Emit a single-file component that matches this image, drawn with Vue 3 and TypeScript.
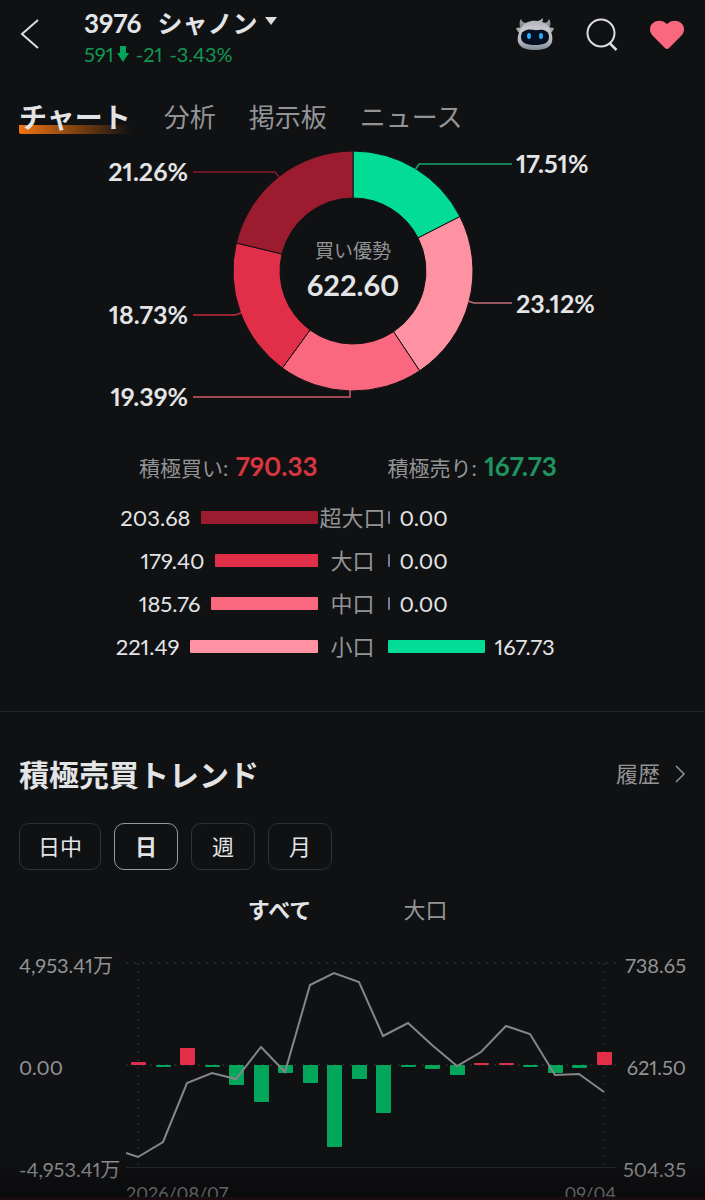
<script setup lang="ts">
import { ref } from 'vue'

interface Slice {
  share: number
  color: string
  line: string
  lineColor: string
  x: number
  y: number
  anchor: 'start' | 'end'
}

interface OrderRow {
  label: string
  buy: number
  sell: number
  color: string
}

const tabs = ['チャート', '分析', '掲示板', 'ニュース']
const activeTab = ref('チャート')
const periods = ['日中', '日', '週', '月']
const activePeriod = ref('日')
const scopes = ['すべて', '大口']
const activeScope = ref('すべて')

const slices: Slice[] = [
  { share: 17.51, color: '#03dc94', line: '62,-101 66,-107 159,-107', lineColor: '#10a674', x: 163, y: -98, anchor: 'start' },
  { share: 23.12, color: '#ff92a2', line: '115,30 121,32 159,32', lineColor: '#c06c79', x: 163, y: 42, anchor: 'start' },
  { share: 19.39, color: '#fa687f', line: '-160,126 -3,126 -3,119', lineColor: '#d05b6e', x: -165, y: 135, anchor: 'end' },
  { share: 18.73, color: '#e22f49', line: '-160,44 -118,44 -112,42', lineColor: '#c22a40', x: -165, y: 53, anchor: 'end' },
  { share: 21.26, color: '#9a1c2e', line: '-160,-99 -78,-99 -74,-94', lineColor: '#861a2b', x: -165, y: -90, anchor: 'end' },
]

const OUTER = 120
const INNER = 73

function point(radius: number, share: number): string {
  const angle = (share / 100) * Math.PI * 2
  return `${(radius * Math.sin(angle)).toFixed(2)} ${(-radius * Math.cos(angle)).toFixed(2)}`
}

let total = 0
const arcs = slices.map((slice) => {
  const from = total
  total += slice.share
  return {
    ...slice,
    path: `M${point(OUTER, from)}A${OUTER} ${OUTER} 0 0 1 ${point(OUTER, total)}L${point(INNER, total)}A${INNER} ${INNER} 0 0 0 ${point(INNER, from)}Z`,
  }
})

const rows: OrderRow[] = [
  { label: '超大口', buy: 203.68, sell: 0, color: '#9a1c2e' },
  { label: '大口', buy: 179.4, sell: 0, color: '#e22f49' },
  { label: '中口', buy: 185.76, sell: 0, color: '#fa687f' },
  { label: '小口', buy: 221.49, sell: 167.73, color: '#ff92a2' },
]

const barWidth = (value: number): string => `${Math.max(2, Math.round(value * 0.576))}px`

const flows = [3, -2, 17, -2, -20, -37, -8, -18, -82, -14, -48, -2, -4, -10, 2, 2, -2, -8, -3, 13]
const BASE = 110
const columnX = (i: number): number => Math.round(12 + (i * 466) / 19)
const prices = [202, 187, 128, 118, 124, 92, 117, 30, 18, 27, 81, 68, 90, 111, 97, 71, 79, 120, 119, 137]
const priceLine = ['0,198', ...prices.map((y, i) => `${columnX(i)},${y}`)].join(' ')
</script>

<template>
  <div class="app">
    <main class="content">
      <header class="header">
        <button class="icon-button back" type="button" aria-label="戻る">
          <svg width="20" height="32" viewBox="0 0 20 32" fill="none" stroke="#dcdddf" stroke-width="2">
            <path d="M18 2L2 16L18 30" />
          </svg>
        </button>
        <div class="stock">
          <button class="stock-name" type="button">
            <span>3976</span>
            <span class="company">シャノン</span>
            <svg width="12" height="8" viewBox="0 0 12 8"><path d="M0 0H12L6 8Z" fill="#dcdddf" /></svg>
          </button>
          <p class="quote">
            <span>591</span>
            <svg width="12" height="16" viewBox="0 0 12 16"><path d="M3 0H9V7H12L6 16L0 7H3Z" fill="#02a65b" /></svg>
            <span class="change">-21</span>
            <span>-3.43%</span>
          </p>
        </div>
        <nav class="actions" aria-label="操作">
          <button class="icon-button" type="button" aria-label="アシスタント">
            <svg width="40" height="36" viewBox="0 0 40 36">
              <defs>
                <linearGradient id="shell" x1="0" y1="0" x2="0" y2="1">
                  <stop offset="0" stop-color="#a9abb0" />
                  <stop offset="0.35" stop-color="#c6c8cc" />
                  <stop offset="0.75" stop-color="#b3b7be" />
                  <stop offset="1" stop-color="#7f8793" />
                </linearGradient>
                <linearGradient id="horn" x1="0" y1="0" x2="0" y2="1">
                  <stop offset="0" stop-color="#a9abb0" />
                  <stop offset="1" stop-color="#6e727a" />
                </linearGradient>
              </defs>
              <path d="M6 3C7 6 9 7 12 7L7 14C4 11 4 6 6 3ZM34 3C36 6 36 11 33 14L28 7C31 7 33 6 34 3Z" fill="url(#horn)" />
              <path d="M1 12L8 11L5 17C3 16 2 15 1 12ZM39 12L32 11L35 17C37 16 38 15 39 12Z" fill="#a3a7ae" />
              <path d="M7 11C10 6 16 4 22 5C24 5 26 4 28 2C28 3 28 5 27 6C31 7 34 10 35 14C37 17 38 22 37 26C35 32 29 34 20 34S5 32 3 26C2 21 4 15 7 11Z" fill="url(#shell)" />
              <path d="M20 13C9 13 6 16 6 21C6 27 11 29 20 29S34 27 34 21C34 16 31 13 20 13Z" fill="#071022" />
              <path d="M7 14C12 11 16 15 24 14C28 13 31 13 33 15C31 11 26 10 20 10S9 11 7 14Z" fill="#c3c5c9" />
              <ellipse cx="14" cy="20" rx="2" ry="3" fill="#2aaefa" />
              <ellipse cx="26" cy="20" rx="2" ry="3" fill="#2aaefa" />
            </svg>
          </button>
          <button class="icon-button" type="button" aria-label="検索">
            <svg width="34" height="36" viewBox="0 0 34 36" fill="none" stroke="#dcdddf" stroke-width="2">
              <circle cx="16" cy="17" r="13.5" />
              <path d="M24.500 27L31.500 34" stroke-width="2.500" />
            </svg>
          </button>
          <button class="icon-button" type="button" aria-label="お気に入り">
            <svg width="36" height="36" viewBox="0 0 36 36">
              <path d="M18 33C17 33 16 32 15 31L4 20C0 16 0 10 4 7C8 3.500 14 4 18 8C22 4 28 3.500 32 7C36 10 36 16 32 20L21 31C20 32 19 33 18 33Z" fill="#fa687f" />
            </svg>
          </button>
        </nav>
      </header>

      <nav class="tabs" aria-label="銘柄情報">
        <button
          v-for="tab in tabs"
          :key="tab"
          type="button"
          class="tab"
          :class="{ active: tab === activeTab }"
          @click="activeTab = tab"
        >{{ tab }}</button>
      </nav>

      <section class="distribution">
        <svg class="donut" viewBox="-253 -129 505 270" role="img" aria-label="買い優勢 622.60">
          <path v-for="arc in arcs" :key="arc.share" :d="arc.path" :fill="arc.color" stroke="#101113" stroke-width="1" />
          <polyline v-for="arc in arcs" :key="arc.line" :points="arc.line" fill="none" :stroke="arc.lineColor" stroke-width="1.500" />
          <text v-for="arc in arcs" :key="arc.color" class="share" :x="arc.x" :y="arc.y" :text-anchor="arc.anchor">{{ arc.share.toFixed(2) }}%</text>
          <text class="lead-label" x="0" y="-13" text-anchor="middle">買い優勢</text>
          <text class="lead-value" x="0" y="25" text-anchor="middle">622.60</text>
        </svg>

        <table class="orders">
          <colgroup><col /><col class="middle" /><col /></colgroup>
          <thead>
            <tr>
              <th scope="col" class="buy">積極買い: <strong>790.33</strong></th>
              <td></td>
              <th scope="col" class="sell">積極売り: <strong>167.73</strong></th>
            </tr>
          </thead>
          <tbody>
            <tr v-for="row in rows" :key="row.label">
              <td>
                <div class="measure left">
                  <span>{{ row.buy.toFixed(2) }}</span>
                  <i class="bar" :style="{ width: barWidth(row.buy), background: row.color }"></i>
                </div>
              </td>
              <th scope="row">{{ row.label }}</th>
              <td>
                <div class="measure">
                  <i class="bar" :class="row.sell ? 'sold' : 'none'" :style="{ width: barWidth(row.sell) }"></i>
                  <span>{{ row.sell.toFixed(2) }}</span>
                </div>
              </td>
            </tr>
          </tbody>
        </table>
      </section>

      <section class="trend">
        <div class="trend-head">
          <h2>積極売買トレンド</h2>
          <a href="#history" class="history">
            履歴
            <svg width="12" height="18" viewBox="0 0 12 18" fill="none" stroke="#939496" stroke-width="1.500"><path d="M2 1L10 9L2 17" /></svg>
          </a>
        </div>

        <div class="periods">
          <button
            v-for="period in periods"
            :key="period"
            type="button"
            class="period"
            :class="{ active: period === activePeriod }"
            @click="activePeriod = period"
          >{{ period }}</button>
        </div>

        <div class="scopes">
          <button
            v-for="scope in scopes"
            :key="scope"
            type="button"
            class="scope"
            :class="{ active: scope === activeScope }"
            @click="activeScope = scope"
          >{{ scope }}</button>
        </div>

        <div class="chart">
          <div class="axis"><span>4,953.41万</span><span>0.00</span><span>-4,953.41万</span></div>
          <svg class="plot" viewBox="0 0 490 224" role="img" aria-label="積極売買トレンド">
            <g stroke="#242528" stroke-width="2" stroke-dasharray="2 6">
              <path d="M0 8H490M0 110H490M12 8V210M478 8V210" />
            </g>
            <path d="M0 212.500H490" stroke="#292a2d" />
            <rect
              v-for="(flow, i) in flows"
              :key="i"
              :x="columnX(i) - 7"
              :y="flow > 0 ? BASE - flow : BASE"
              width="15"
              :height="Math.abs(flow)"
              rx="1"
              :fill="flow > 0 ? '#e22f49' : '#02a65b'"
            />
            <polyline :points="priceLine" fill="none" stroke="#858688" stroke-width="2" />
          </svg>
          <div class="axis right"><span>738.65</span><span>621.50</span><span>504.35</span></div>
          <div class="dates"><span>2026/08/07</span><span>09/04</span></div>
        </div>
      </section>
    </main>
    <div class="edge"></div>
  </div>
</template>

<style>
body {
  background: #101113;
}
</style>

<style scoped>
.app {
  position: relative;
  display: flex;
  flex-direction: column;
  height: 100vh;
  overflow: hidden;
  background: #101113;
  color: #e3e4e6;
  font-family: Lato, "Noto Sans CJK JP", sans-serif;
  font-variant-numeric: proportional-nums;
}

.content {
  flex: 1;
  min-height: 0;
  overflow-y: auto;
  scrollbar-width: none;
}

.edge {
  height: 3px;
  background: #1b0c11;
}

.edge::before {
  content: "";
  position: absolute;
  right: 0;
  bottom: 3px;
  left: 0;
  height: 40px;
  background: linear-gradient(transparent, rgba(0, 0, 0, 0.4));
  pointer-events: none;
}

button {
  margin: 0;
  padding: 0;
  border: 0;
  background: none;
  color: inherit;
  font: inherit;
  font-variant-numeric: inherit;
  cursor: pointer;
}

svg {
  display: block;
  flex: none;
}

.header {
  display: flex;
  align-items: flex-start;
  padding: 8px 20px 0;
}

.back {
  width: 64px;
  padding-top: 10px;
}

.stock {
  flex: 1;
}

.stock-name {
  display: flex;
  align-items: center;
  gap: 16px;
  font-size: 26px;
  font-weight: 700;
  line-height: 30px;
}

.company {
  font-size: 25px;
}

.stock-name svg {
  margin: 0 0 4px -8px;
}

.quote {
  display: flex;
  align-items: center;
  gap: 3px;
  margin: 4px 0 0;
  color: #109854;
  font-size: 20px;
  line-height: 24px;
}

.change {
  margin: 0 4px;
}

.actions {
  display: flex;
  gap: 30px;
  padding-top: 8px;
}

.tabs {
  display: flex;
  align-items: center;
  gap: 33px;
  padding: 30px 19px 0;
}

.tab {
  padding-top: 4px;
  color: #939496;
  font-size: 26px;
  line-height: 34px;
  white-space: nowrap;
}

.tab.active {
  background: linear-gradient(90deg, #f0740f, rgba(240, 116, 15, 0)) left bottom / 100% 9px no-repeat;
  border-bottom-left-radius: 2px;
  color: #e3e4e6;
  font-size: 28px;
  font-weight: 700;
}

.donut {
  width: 505px;
  max-width: 100%;
  margin: 8px auto 0;
}

.share {
  fill: #e3e4e6;
  font-size: 25px;
  font-weight: 700;
}

.lead-label {
  fill: #939496;
  font-size: 19px;
}

.lead-value {
  fill: #e3e4e6;
  font-size: 29px;
  font-weight: 700;
}

.orders {
  width: 100%;
  margin-top: 32px;
  border-collapse: collapse;
  table-layout: fixed;
}

.orders .middle {
  width: 70px;
}

.orders th,
.orders td {
  height: 43px;
  padding: 0;
  font-weight: 400;
  line-height: 30px;
  white-space: nowrap;
}

.orders thead th {
  height: 46px;
  padding-bottom: 6px;
  color: #939496;
  font-size: 21px;
  text-align: left;
}

.orders thead .buy {
  text-align: right;
}

.orders strong {
  margin-left: 2px;
  color: #d7363f;
  font-size: 26px;
}

.orders .sell strong {
  color: #1e9560;
}

.orders tbody th {
  color: #939496;
  font-size: 22px;
}

.measure {
  display: flex;
  align-items: center;
  gap: 10px;
  font-size: 22px;
}

.measure.left {
  justify-content: flex-end;
}

.bar {
  height: 13px;
  border-radius: 1px;
}

.sold {
  background: #03dc94;
}

.none {
  background: #737b9d;
}

.trend {
  margin-top: 43px;
  padding: 41px 19px 0;
  border-top: 1px solid #222326;
}

.trend-head {
  display: flex;
  align-items: center;
  justify-content: space-between;
}

h2 {
  margin: 0;
  font-size: 30px;
  font-weight: 700;
  line-height: 42px;
}

.history {
  display: flex;
  align-items: center;
  gap: 14px;
  color: #939496;
  font-size: 22px;
  line-height: 32px;
  text-decoration: none;
}

.periods {
  display: flex;
  gap: 13px;
  margin-top: 28px;
}

.period {
  min-width: 64px;
  height: 47px;
  padding: 0 18px 4px;
  border: 1px solid #303134;
  border-radius: 10px;
  font-size: 22px;
}

.period.active {
  border-color: #98999b;
  font-weight: 700;
}

.scopes {
  display: flex;
  justify-content: center;
  margin-top: 24px;
}

.scope {
  width: 146px;
  color: #939496;
  font-size: 22px;
  line-height: 32px;
}

.scope.active {
  color: #e3e4e6;
  font-weight: 700;
}

.chart {
  display: grid;
  grid-template-columns: 101px 1fr 64px;
  column-gap: 6px;
  margin-top: 29px;
  color: #939496;
  font-size: 20px;
  line-height: 20px;
  white-space: nowrap;
}

.axis {
  display: flex;
  flex-direction: column;
  justify-content: space-between;
}

.right {
  align-items: flex-end;
}

.plot {
  width: 100%;
}

.dates {
  display: flex;
  grid-column: 2;
  justify-content: space-between;
  padding-top: 4px;
  font-size: 18px;
}
</style>
